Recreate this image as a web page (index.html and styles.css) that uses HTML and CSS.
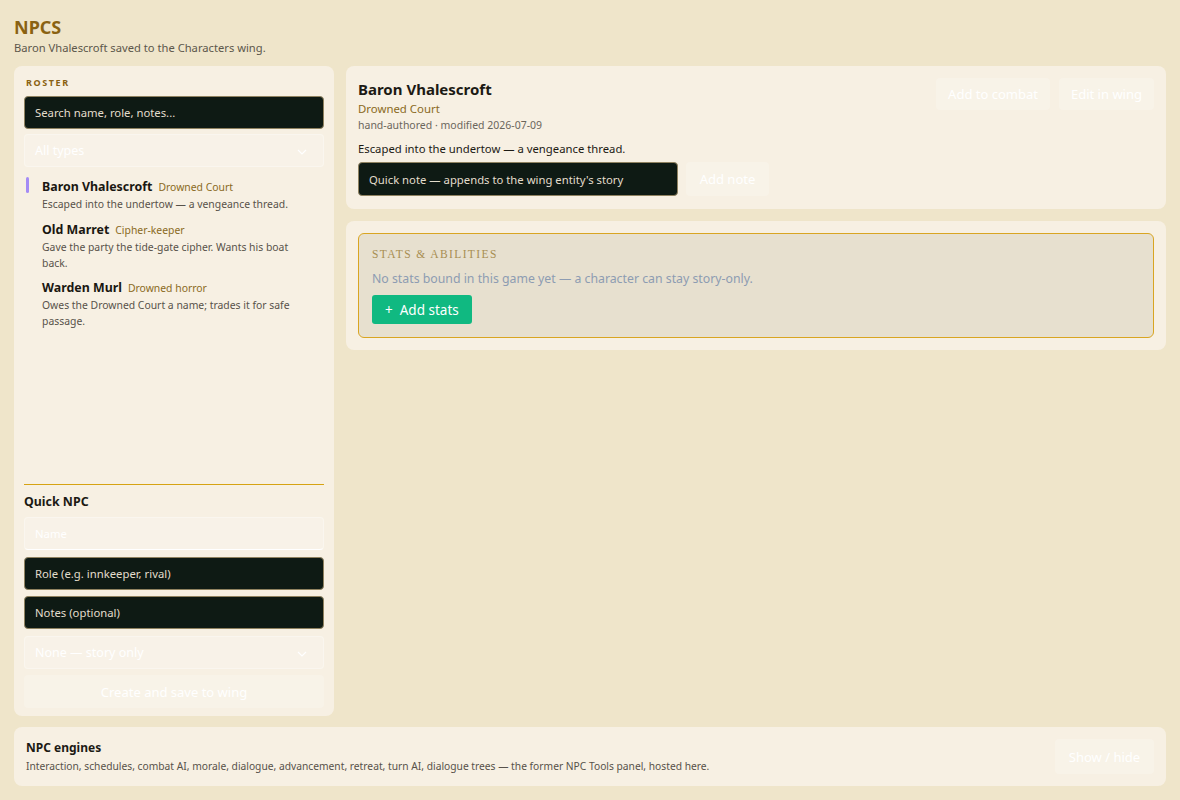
FILE: index.html
```html
<!DOCTYPE html>
<html lang="en">
<head>
    <meta charset="UTF-8">
    <meta name="viewport" content="width=device-width, initial-scale=1.0">
    <title>NPCs</title>
    <link rel="stylesheet" href="styles.css">
</head>
<body>
    <header class="page-head">
        <h1>NPCS</h1>
        <p class="status">Baron Vhalescroft saved to the Characters wing.</p>
    </header>

    <div class="layout">
        <aside class="panel roster-panel">
            <div class="label">ROSTER</div>
            <input class="field dark" type="text" placeholder="Search name, role, notes...">
            <div class="field ghost select">
                <span>All types</span>
                <svg width="10" height="6" viewBox="0 0 10 6"><path d="M1 1l4 4 4-4" fill="none" stroke="#fff" stroke-width="1.2"/></svg>
            </div>

            <ul class="roster">
                <li class="npc active">
                    <div class="npc-head"><span class="npc-name">Baron Vhalescroft</span><span class="npc-role">Drowned Court</span></div>
                    <div class="npc-desc">Escaped into the undertow — a vengeance thread.</div>
                </li>
                <li class="npc">
                    <div class="npc-head"><span class="npc-name">Old Marret</span><span class="npc-role">Cipher-keeper</span></div>
                    <div class="npc-desc">Gave the party the tide-gate cipher. Wants his boat back.</div>
                </li>
                <li class="npc">
                    <div class="npc-head"><span class="npc-name">Warden Murl</span><span class="npc-role">Drowned horror</span></div>
                    <div class="npc-desc">Owes the Drowned Court a name; trades it for safe passage.</div>
                </li>
            </ul>

            <div class="quick">
                <h3>Quick NPC</h3>
                <input class="field ghost name-field" type="text" placeholder="Name">
                <input class="field dark" type="text" placeholder="Role (e.g. innkeeper, rival)">
                <input class="field dark" type="text" placeholder="Notes (optional)">
                <div class="field ghost select">
                    <span>None — story only</span>
                    <svg width="10" height="6" viewBox="0 0 10 6"><path d="M1 1l4 4 4-4" fill="none" stroke="#fff" stroke-width="1.2"/></svg>
                </div>
                <button class="btn ghost-btn wide">Create and save to wing</button>
            </div>
        </aside>

        <main class="main">
            <section class="panel card">
                <div class="card-top">
                    <div>
                        <h2>Baron Vhalescroft</h2>
                        <div class="role">Drowned Court</div>
                        <div class="meta">hand-authored · modified 2026-07-09</div>
                    </div>
                    <div class="actions">
                        <button class="btn ghost-btn">Add to combat</button>
                        <button class="btn ghost-btn">Edit in wing</button>
                    </div>
                </div>
                <p class="summary">Escaped into the undertow — a vengeance thread.</p>
                <div class="note-row">
                    <input class="field dark note-input" type="text" placeholder="Quick note — appends to the wing entity's story">
                    <button class="btn ghost-btn">Add note</button>
                </div>
            </section>

            <section class="panel card stats-card">
                <div class="stats-box">
                    <div class="stats-title">Stats &amp; Abilities</div>
                    <p class="stats-empty">No stats bound in this game yet — a character can stay story-only.</p>
                    <button class="btn add-stats">+&nbsp; Add stats</button>
                </div>
            </section>
        </main>
    </div>

    <footer class="panel engines">
        <div>
            <div class="engines-title">NPC engines</div>
            <div class="engines-desc">Interaction, schedules, combat AI, morale, dialogue, advancement, retreat, turn AI, dialogue trees — the former NPC Tools panel, hosted here.</div>
        </div>
        <button class="btn ghost-btn toggle">Show / hide</button>
    </footer>
</body>
</html>
```

FILE: styles.css
```css
* {
    box-sizing: border-box;
}
body {
    margin: 0;
    padding: 14px 14px 0;
    font-family: "Noto Sans", "Open Sans", sans-serif;
    background-color: #efe5ca;
    color: #1c1a14;
}
.page-head h1 {
    margin: 0;
    font-size: 18px;
    line-height: 26px;
    color: #8a6212;
}
.status {
    margin: 0 0 10px;
    font-size: 11.2px;
    line-height: 16px;
    color: #5c574b;
}
.layout {
    display: grid;
    grid-template-columns: 320px 1fr;
    gap: 12px;
}
.panel {
    background-color: #f7f0e3;
    border-radius: 8px;
}
.roster-panel {
    height: 650px;
    padding: 10px 10px 8px;
    display: flex;
    flex-direction: column;
}
.label {
    font-size: 9px;
    line-height: 14px;
    font-weight: bold;
    letter-spacing: 1.6px;
    color: #8a6212;
    margin: 0 0 6px 2px;
}
.field {
    width: 100%;
    height: 33px;
    padding: 0 10px;
    border-radius: 4px;
    font-family: inherit;
    font-size: 11.3px;
    display: flex;
    align-items: center;
}
.field.dark {
    background-color: #0e1a14;
    border: 1px solid #8f8260;
    color: #e8e2d2;
}
.field.dark::placeholder {
    color: #e3ddcc;
}
.field.ghost {
    background-color: rgba(255, 255, 255, 0.18);
    border: 1px solid rgba(255, 255, 255, 0.3);
    color: #fff;
}
.field.ghost::placeholder {
    color: #fff;
}
.select {
    justify-content: space-between;
    margin-top: 5px;
    font-size: 12.5px;
}
.select svg {
    margin-right: 6px;
    margin-top: 3px;
}
.roster {
    list-style: none;
    margin: 10px 0 0;
    padding: 0;
    flex: 1;
}
.npc {
    position: relative;
    padding: 0 8px 0 18px;
    margin-bottom: 7.5px;
}
.npc.active::before {
    content: "";
    position: absolute;
    left: 2px;
    top: 0;
    width: 3px;
    height: 16px;
    border-radius: 2px;
    background-color: #a48bf5;
}
.npc-head {
    line-height: 17px;
}
.npc-name {
    font-size: 12.4px;
    font-weight: bold;
    color: #1a1711;
    margin-right: 6px;
}
.npc-role {
    font-size: 10.4px;
    color: #8a6a22;
}
.npc-desc {
    font-size: 10.4px;
    line-height: 16px;
    color: #57524a;
}
.quick {
    border-top: 1px solid #d6a313;
    padding-top: 8px;
    display: flex;
    flex-direction: column;
    gap: 6.5px;
}
.quick h3 {
    margin: 0;
    font-size: 12.4px;
    line-height: 18px;
}
.quick .select {
    margin-top: 0;
}
.name-field {
    border-bottom-color: #fff !important;
}
.btn {
    font-family: inherit;
    font-size: 13px;
    border: none;
    border-radius: 4px;
    cursor: pointer;
}
.ghost-btn {
    background-color: rgba(255, 255, 255, 0.2);
    color: #fff;
    padding: 0 12px;
    height: 33px;
}
.wide {
    width: 100%;
}
.main {
    display: flex;
    flex-direction: column;
    gap: 12px;
}
.card {
    padding: 12px 12px 13px;
}
.card-top {
    display: flex;
    justify-content: space-between;
    align-items: flex-start;
}
.card h2 {
    margin: 1px 0 1px;
    font-size: 15px;
    line-height: 20px;
}
.role {
    font-size: 11.4px;
    line-height: 17px;
    color: #8a6a22;
}
.meta {
    font-size: 10.5px;
    line-height: 17px;
    color: #6b665c;
}
.actions {
    display: flex;
    gap: 9px;
}
.actions .ghost-btn {
    height: 32px;
}
.summary {
    margin: 7px 0 5px;
    font-size: 11.3px;
    line-height: 16px;
}
.note-row {
    display: flex;
    gap: 8px;
}
.note-input {
    width: 320px;
    height: 34px;
}
.note-row .ghost-btn {
    width: 83px;
    height: 34px;
}
.stats-card {
    padding: 12px;
}
.stats-box {
    background-color: #e7e0cf;
    border: 1px solid #d9a522;
    border-radius: 6px;
    padding: 12px 13px 13px;
}
.stats-title {
    font-family: "Liberation Serif", serif;
    text-transform: uppercase;
    font-size: 11.5px;
    line-height: 16px;
    letter-spacing: 1.4px;
    color: #a88e52;
}
.stats-empty {
    margin: 8px 0 7px;
    font-size: 12.3px;
    line-height: 18px;
    color: #8d9cb2;
}
.add-stats {
    background-color: #10b981;
    color: #fff;
    height: 29px;
    padding: 0 13px;
    border-radius: 3px;
    font-size: 13.5px;
}
.engines {
    margin-top: 11px;
    height: 59px;
    padding: 0 12px;
    display: flex;
    justify-content: space-between;
    align-items: center;
}
.engines-title {
    font-size: 12px;
    font-weight: bold;
    line-height: 18px;
    margin-bottom: 2px;
}
.engines-desc {
    font-size: 10.25px;
    line-height: 15px;
    color: #57524a;
}
.toggle {
    height: 35px;
    width: 99px;
}
```
